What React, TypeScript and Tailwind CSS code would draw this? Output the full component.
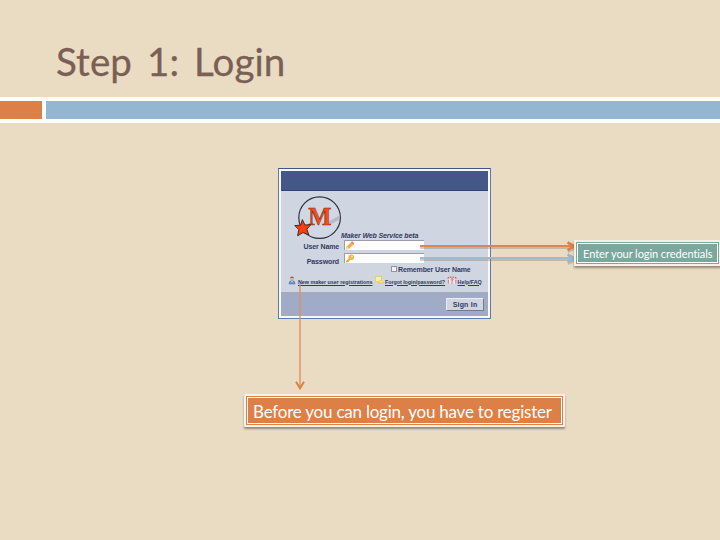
import React from "react";

function MakerLogo() {
  return (
    <svg className="block h-[44px] w-[48px] shrink-0" viewBox="294 196 48 44">
      <circle cx="319.6" cy="217.6" r="20.8" fill="#d2d7e4" stroke="#2d2f38" strokeWidth="1.2" />
      <path d="M328 222 L340 215 L339 220 L331 224Z" fill="#b9bbc4" />
      <text x="319.8" y="225" textAnchor="middle" fontSize="26" fontWeight="700" textLength="23" lengthAdjust="spacingAndGlyphs" fill="#ff4a12" stroke="#55352f" strokeWidth="0.6" className="font-['Liberation_Serif',serif]">
        M
      </text>
      <path d="M302.4 219.6 L304.9 225 L310.8 224.6 L306.9 229.2 L308.8 235 L303 232.6 L297.6 235.8 L298.8 229.6 L294.8 225.6 L300.6 225.2Z" fill="#ff3d0a" stroke="#33201c" strokeWidth="0.9" />
    </svg>
  );
}

function PencilIcon() {
  return (
    <svg className="h-[9px] w-[10px]" viewBox="0 0 10 9">
      <path d="M.8 8.7 L1.8 5.3 L6.6 0.8 L9 3 L4.2 7.7Z" fill="#efb04e" />
      <path d="M6 1.2 L7 .3 L9.4 2.5 L8.5 3.4Z" fill="#d9826a" />
      <path d="M1.8 5.3 L4.2 7.7 L.8 8.7Z" fill="#f8dfb0" />
    </svg>
  );
}

function KeyIcon() {
  return (
    <svg className="h-[9px] w-[10px]" viewBox="0 0 10 9">
      <path d="M.6 7.6 L5 3.2 L6.8 5 L4.6 6.4 L3.6 8 L1.4 8.6Z" fill="#e8ae3c" />
      <circle cx="6.3" cy="3.2" r="2.8" fill="#edb945" />
      <circle cx="7" cy="2.5" r=".7" fill="#fff3d0" />
    </svg>
  );
}

function UserIcon() {
  return (
    <svg className="-mt-[3px] h-[9px] w-[8px] shrink-0" viewBox="0 0 8 9">
      <path d="M1 8 Q.8 4.8 4 4.6 Q7.2 4.8 7 8Z" fill="#6f9bd0" stroke="#41659c" strokeWidth=".5" />
      <circle cx="4" cy="2.7" r="1.8" fill="#e9b08a" />
      <path d="M2.1 2.4 Q2.3 .4 4 .5 Q5.8 .4 5.9 2.4 Q4 1.1 2.1 2.4Z" fill="#8b5a3c" />
      <path d="M3.2 5 L4 6.6 L4.8 5Z" fill="#eef3fb" />
    </svg>
  );
}

function MailKeyIcon() {
  return (
    <svg className="-mt-[3px] h-[9px] w-[9px] shrink-0" viewBox="0 0 9 9">
      <rect x=".4" y=".6" width="6" height="5" fill="#f7ecb8" stroke="#e4c15a" strokeWidth=".6" />
      <path d="M3 4 H8.5 V8 H3Z" fill="#f3cf58" />
      <path d="M3 4 L5.8 6.2 L8.5 4" fill="none" stroke="#fdf3cd" strokeWidth=".8" />
    </svg>
  );
}

function HelpIcon() {
  return (
    <svg className="-mt-[3px] h-[8px] w-[10px] shrink-0" viewBox="0 0 10 8">
      <path d="M2.7 3.5 V7.5 M7.4 3.5 V7.5" stroke="#f6f3f6" strokeWidth="1.4" />
      <path d="M.6 2.6 L2 1.2 M3 1.6 L4.4 .8 M5.6 .8 L6.8 1.6 M8 1.2 L9.4 2.6" stroke="#dc5d58" strokeWidth="1.2" />
      <path d="M1.4 7.5 V4 M3.8 3.4 Q5 2 6 3 Q6.4 4 5 4.8 V5.6 M5 6.6 V7.6 M8.8 7.5 V4" fill="none" stroke="#d96a66" strokeWidth=".9" />
    </svg>
  );
}

function FieldRow({ label, labelClass, icon }: { label: string; labelClass: string; icon: React.ReactNode }) {
  return (
    <div className="flex h-[10px] items-start">
      <div className={`w-[58px] text-right text-[7px] font-bold ${labelClass}`}>{label}</div>
      <div className="ml-[5px] flex h-[10px] w-[80px] border-t border-l border-[#9b9ca5] bg-[#fdfdfe]">{icon}</div>
    </div>
  );
}

function LoginCard() {
  return (
    <div className="h-[151px] w-[213px] border border-[#6179aa] border-t-[#405589] bg-[#f7f8fa] p-[2px] font-['Liberation_Sans',Arial,sans-serif] text-[#303a62]">
      <div className="flex h-full flex-col">
        <div className="h-[20px] shrink-0 border-b border-[#35456f] bg-[#445788]" />
        <div className="flex h-[102px] shrink-0 flex-col border-b border-[#a9a9ae] bg-[#d0d5e2]">
          <div className="flex h-[49px] items-start pt-[5px] pl-[13px]">
            <MakerLogo />
            <span className="mt-[35px] -ml-[1px] text-[7px] leading-[10px] font-bold italic tracking-[-0.13px] whitespace-nowrap">Maker Web Service beta</span>
          </div>
          <FieldRow label="User Name" labelClass="leading-[13px] tracking-[-0.13px]" icon={<PencilIcon />} />
          <div className="h-[3px]" />
          <FieldRow label="Password" labelClass="leading-[17px] tracking-[-0.1px]" icon={<KeyIcon />} />
          <div className="flex h-[12px] items-center pl-[110px]">
            <span className="h-[6px] w-[6px] border border-[#92949c] bg-[#f2f2f4]" />
            <span className="mt-[1px] ml-[1px] text-[7px] leading-[8px] font-bold tracking-[-0.12px] whitespace-nowrap">Remember User Name</span>
          </div>
          <div className="flex h-[13px] items-center pl-[7px] text-[5.4px] leading-[8px] font-bold whitespace-nowrap">
            <UserIcon />
            <span className="ml-[2px] w-[75px] tracking-[-0.04px] underline">New maker user registrations</span>
            <span className="ml-[2px] flex"><MailKeyIcon /></span>
            <span className="ml-[1px] w-[60px] tracking-[-0.06px] underline">Forgot login/password?</span>
            <span className="ml-[2px] flex"><HelpIcon /></span>
            <span className="ml-[0.5px] underline">Help/FAQ</span>
          </div>
        </div>
        <div className="flex grow items-start justify-end bg-[#a0abc8] pt-[5px] pr-[4px]">
          <button className="h-[13px] w-[38px] border border-t-[#eceef3] border-r-[#777b87] border-b-[#777b87] border-l-[#e8eaf0] bg-[#d0d5e1] text-[7px] leading-[11px] font-bold tracking-[0.2px]">Sign In</button>
        </div>
      </div>
    </div>
  );
}

function Arrows() {
  return (
    <svg className="pointer-events-none absolute top-0 left-0 h-[540px] w-[720px]" viewBox="0 0 720 540" fill="none">
      <g stroke="#7e7769" strokeOpacity=".35" strokeWidth="2">
        <path d="M420 248 H572 M568 244.5 L575 248.4 L568 252.2" />
        <path d="M420 260 H572 M568 256.5 L575 260.4 L568 264.2" />
      </g>
      <path d="M420 246 H574" stroke="#d98658" strokeWidth="2" />
      <path d="M567.5 242.4 L574.5 246.3 L567.5 250.2" stroke="#dd8047" strokeWidth="2.6" />
      <path d="M420 258 H574" stroke="#9ebad1" strokeWidth="2" />
      <path d="M567.5 254.4 L574.5 258.3 L567.5 262.2" stroke="#94b6d2" strokeWidth="2.6" />
      <path d="M300 284 V388" stroke="#df9060" strokeWidth="1.4" />
      <path d="M296 381.8 L300 388.3 L304 381.8" stroke="#dd8047" strokeWidth="2" />
    </svg>
  );
}

export default function App() {
  return (
    <main className="relative h-[540px] w-[720px] overflow-hidden bg-[#eadcc3] font-[Lato,sans-serif]">
      <header className="h-[97px] pt-[36px] pl-[56px]">
        <h1 className="text-[38.5px] leading-[50px] tracking-[0.1px] [word-spacing:5px] whitespace-nowrap text-[#7a6054] [-webkit-text-stroke:0.3px_#7a6054]">Step 1: Login</h1>
      </header>
      <div className="flex h-[26px] gap-[4px] bg-white pt-[4px] pb-[4px]">
        <div className="w-[42px] bg-[#dd8047]" />
        <div className="grow bg-[#94b6d2]" />
      </div>
      <section className="pt-[45px] pl-[278px]">
        <LoginCard />
      </section>
      <Arrows />
      <div className="absolute top-[240px] left-[574px] h-[26px] w-[147px] border-2 border-[#f5f1e9] bg-[#7ba79d] p-[1px] shadow-[0_2px_2px_rgba(70,60,45,0.5)]">
        <div className="h-full border border-white pl-[5px] text-[11px] leading-[20px] tracking-[-0.06px] whitespace-nowrap text-white">Enter your login credentials</div>
      </div>
      <div className="absolute top-[394px] left-[244px] h-[33px] w-[321px] rounded-[1px] border-2 border-[#f5f1e9] bg-[#dd8047] p-[1px] shadow-[0_2px_2px_rgba(70,60,45,0.5)]">
        <div className="h-full border border-white pl-[5px] text-[17px] leading-[28px] tracking-[-0.22px] whitespace-nowrap text-white">Before you can login, you have to register</div>
      </div>
    </main>
  );
}
